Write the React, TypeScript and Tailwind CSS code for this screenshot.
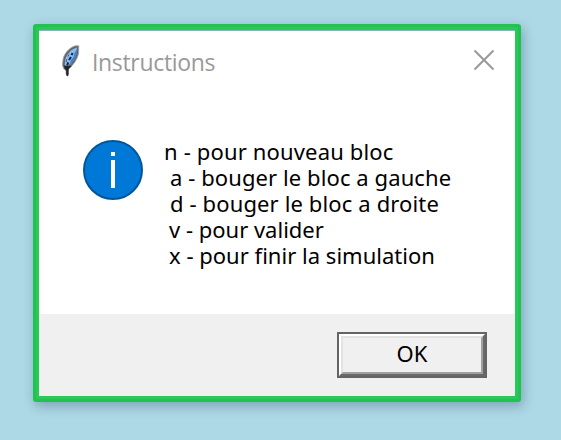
const lines: { text: string; style: string }[] = [
  { text: "n - pour nouveau bloc", style: "ml-0 tracking-[0.16px]" },
  { text: "a - bouger le bloc a gauche", style: "ml-[6px] tracking-[0.09px]" },
  { text: "d - bouger le bloc a droite", style: "ml-[6px] tracking-[0.13px]" },
  { text: "v - pour valider", style: "ml-[5px]" },
  { text: "x - pour finir la simulation", style: "ml-[5px] tracking-[0.02px]" },
];

function Feather() {
  return (
    <svg className="block h-8 w-5 shrink-0" viewBox="0 0 20 32">
      <path d="M17.8.8h-3.4C8.8 2.4 3.8 7.6 2.2 13.4L1.4 20l1.4 4 2.2 1.6h2l1-2.2c4.4-3.2 8.4-9.4 9.6-15Z" fill="#62656a" stroke="#a4a6a8" strokeWidth=".8" />
      <path d="M15.8 2.4C10.6 3.8 6 8.6 4.4 14L3.6 20.4l1.2 1 2.4-.4C11.6 17.6 15 12 16 6.4Z" fill="#8bbcf0" />
      <path d="m16 4-2.4 3.4-1.2 4.8-2.6 3-.8 3-2 2.6c4.6-2.6 8.6-8.8 9-14.4Z" fill="#4182d2" />
      <path d="m11.6 8-1 2.2M10 12l-2 3m-.8 2.4-1 3" stroke="#1b2432" strokeWidth="2" fill="none" />
      <path d="m8.2 9.4-1.4 2.2m-1.2 2.6-.4 3" stroke="#3d5f8e" strokeWidth="1" fill="none" />
      <path d="m3 20.5 1.2 3.5 1 .8v4.2l.8 2h.8l.6-2V24l3-3" fill="#222427" stroke="#222427" strokeWidth=".5" />
    </svg>
  );
}

export default function App() {
  return (
    <main className="h-[440px] w-[561px] overflow-hidden bg-[#add8e6] pl-[33px] pt-[24px] font-['Noto_Sans','Open_Sans',sans-serif]">
      <section className="flex h-[378px] w-[488px] flex-col rounded-[3px] border-[3px] border-[#21c350] bg-white shadow-[2px_4px_12px_rgba(0,30,50,0.28)]">
        <div className="flex flex-1 flex-col border-[3px] border-[#2ac957]">
          <header className="flex h-[64px] items-start border-t border-[#8fb3bd] pl-[22px] pr-[20px] pt-[14px]">
            <Feather />
            <h1 className="ml-[11px] mt-[2px] font-['Open_Sans','Noto_Sans',sans-serif] text-[23px] font-normal leading-[30px] tracking-[-0.33px] text-[#999]">Instructions</h1>
            <button aria-label="Close" className="ml-auto mt-[4px]">
              <svg className="block size-[22px]" viewBox="0 0 22 22">
                <path d="m1.5 1.5 19 19m0-19-19 19" fill="none" stroke="#999" strokeWidth="2" />
              </svg>
            </button>
          </header>
          <div className="flex h-[220px] items-start pl-[44px] pt-[46px]">
            <svg className="block size-[60px] shrink-0" viewBox="0 0 60 60">
              <circle cx="30" cy="30" r="29" fill="#0078d7" stroke="#00569b" strokeWidth="2" />
              <path d="M28 12h4v4h-4zM28 20h4v28h-4z" fill="white" />
            </svg>
            <div className="-mt-[2px] ml-[21px] text-[22px] leading-[26px] text-black">
              {lines.map((line) => (
                <p key={line.text} className="flex whitespace-nowrap">
                  <span className={line.style}>{line.text}</span>
                </p>
              ))}
            </div>
          </div>
          <footer className="flex flex-1 items-start justify-end bg-[#f0f0f0] pr-[28px] pt-[18px]">
            <button className="h-[46px] w-[150px] border-2 border-[#646464]">
              <span className="block h-full border-2 border-b-[#696969] border-l-white border-r-[#696969] border-t-white">
                <span className="flex h-full items-center justify-center border-2 border-b-[#a0a0a0] border-l-[#e3e3e3] border-r-[#a0a0a0] border-t-[#e3e3e3] pb-[4px] text-[22px] leading-[26px] text-black">OK</span>
              </span>
            </button>
          </footer>
        </div>
      </section>
    </main>
  );
}
